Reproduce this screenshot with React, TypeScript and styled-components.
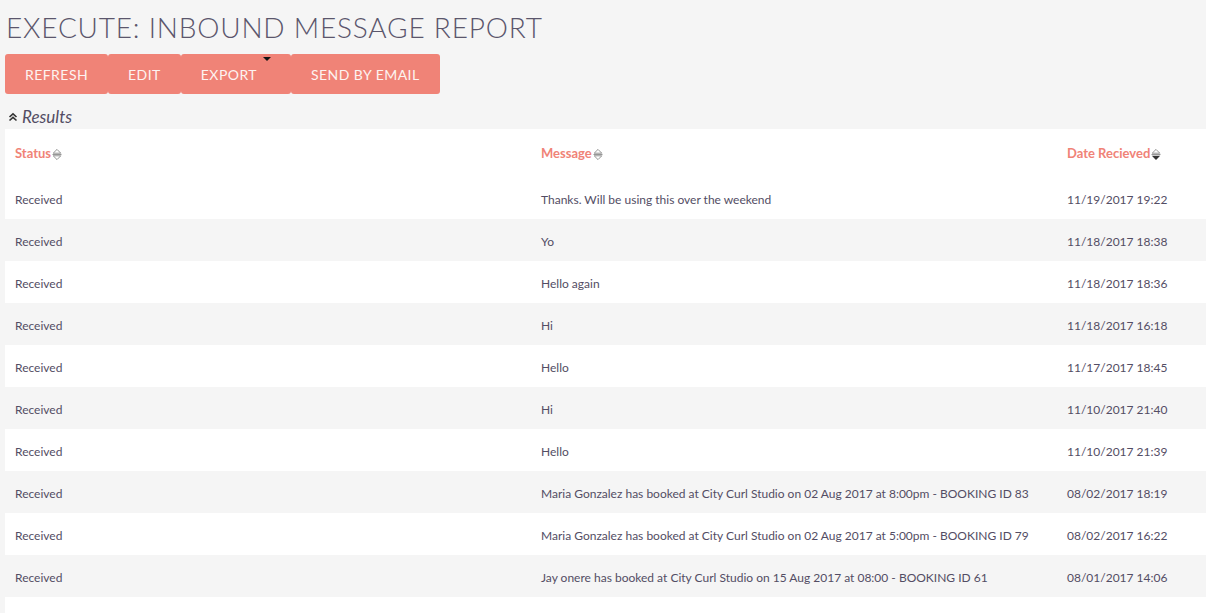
import styled, { createGlobalStyle } from "styled-components";

const Colors = {
    bg: "#f5f5f5",
    text: "#534d64",
    accent: "#f08377",
    white: "#ffffff",
};

const GlobalStyle = createGlobalStyle`
    html, body {
        margin: 0;
        padding: 0;
        background: ${Colors.bg};
        font-family: Lato, "Open Sans", sans-serif;
        color: ${Colors.text};
        overflow: hidden;
    }
`;

const Page = styled.div`
    padding: 0 0 0 5px;
`;

const Title = styled.h1`
    margin: 10px 0 0 1px;
    font-size: 28px;
    font-weight: 300;
    letter-spacing: 0.8px;
    line-height: 35px;
    color: #5b566c;
`;

const ButtonBar = styled.div`
    display: flex;
    margin-top: 9px;
`;

const ActionButton = styled.button<{ $caret?: boolean }>`
    position: relative;
    height: 40px;
    padding: 0 ${(p) => (p.$caret ? "34px" : "20px")} 0 20px;
    border: 0;
    border-radius: 3px;
    background: ${Colors.accent};
    color: #fdf3f1;
    font-family: Lato, sans-serif;
    font-size: 14px;
    letter-spacing: 0.45px;
    text-transform: uppercase;
    cursor: pointer;
`;

const Caret = styled.span`
    position: absolute;
    top: 3px;
    right: 20px;
    width: 0;
    height: 0;
    border-left: 4px solid transparent;
    border-right: 4px solid transparent;
    border-top: 4px solid #111;
`;

const ResultsToggle = styled.div`
    display: flex;
    align-items: center;
    gap: 4px;
    height: 35px;
    padding: 10px 0 0 3px;
    box-sizing: border-box;
    font-size: 17px;
    font-style: italic;
    color: ${Colors.text};
`;

const Table = styled.table`
    width: 100%;
    border-collapse: collapse;
    table-layout: fixed;
`;

const HeadCell = styled.th<{ $width?: number }>`
    width: ${(p) => (p.$width ? `${p.$width}px` : "auto")};
    height: 48px;
    padding: 0 10px;
    background: ${Colors.white};
    text-align: left;
    font-size: 13px;
    font-weight: 700;
    color: ${Colors.accent};
    white-space: nowrap;
`;

const Row = styled.tr<{ $alt: boolean }>`
    background: ${(p) => (p.$alt ? Colors.bg : Colors.white)};
`;

const Cell = styled.td`
    height: 42px;
    box-sizing: border-box;
    padding: 2px 10px 0;
    font-size: 12px;
    color: ${Colors.text};
    white-space: nowrap;
`;

const SortIcon = styled.svg`
    margin-left: 1px;
    vertical-align: -3px;
`;

function Sort({ desc }: { desc?: boolean }) {
    return (
        <SortIcon width="10" height="13" viewBox="0 0 10 13">
            <path d="M1.2 5.2 L5 1.4 L8.8 5.2 Z" fill="none" stroke="#8a8a8a" strokeWidth="0.9" />
            <line x1="0.5" y1="6.5" x2="9.5" y2="6.5" stroke="#8a8a8a" strokeWidth="0.9" />
            {desc ? (
                <path d="M0.8 7.8 L9.2 7.8 L5 12 Z" fill="#333" />
            ) : (
                <path d="M1.2 7.8 L5 11.6 L8.8 7.8 Z" fill="none" stroke="#8a8a8a" strokeWidth="0.9" />
            )}
        </SortIcon>
    );
}

function ChevronsUp() {
    return (
        <svg width="10" height="10" viewBox="0 0 10 10">
            <path d="M1.5 5 L5 1.8 L8.5 5" fill="none" stroke="#333" strokeWidth="1.6" />
            <path d="M1.5 8.5 L5 5.3 L8.5 8.5" fill="none" stroke="#333" strokeWidth="1.6" />
        </svg>
    );
}

const rows = [
    ["Thanks. Will be using this over the weekend", "11/19/2017 19:22"],
    ["Yo", "11/18/2017 18:38"],
    ["Hello again", "11/18/2017 18:36"],
    ["Hi", "11/18/2017 16:18"],
    ["Hello", "11/17/2017 18:45"],
    ["Hi", "11/10/2017 21:40"],
    ["Hello", "11/10/2017 21:39"],
    ["Maria Gonzalez has booked at City Curl Studio on 02 Aug 2017 at 8:00pm - BOOKING ID 83", "08/02/2017 18:19"],
    ["Maria Gonzalez has booked at City Curl Studio on 02 Aug 2017 at 5:00pm - BOOKING ID 79", "08/02/2017 16:22"],
    ["Jay onere has booked at City Curl Studio on 15 Aug 2017 at 08:00 - BOOKING ID 61", "08/01/2017 14:06"],
];

export default function App() {
    return (
        <Page>
            <GlobalStyle />
            <Title>EXECUTE: INBOUND MESSAGE REPORT</Title>
            <ButtonBar>
                <ActionButton>Refresh</ActionButton>
                <ActionButton>Edit</ActionButton>
                <ActionButton $caret>
                    Export
                    <Caret />
                </ActionButton>
                <ActionButton>Send by Email</ActionButton>
            </ButtonBar>
            <ResultsToggle>
                <ChevronsUp />
                Results
            </ResultsToggle>
            <Table>
                <thead>
                    <tr>
                        <HeadCell $width={506}>Status<Sort /></HeadCell>
                        <HeadCell $width={506}>Message<Sort /></HeadCell>
                        <HeadCell>Date Recieved<Sort desc /></HeadCell>
                    </tr>
                </thead>
                <tbody>
                    {rows.map((r, i) => (
                        <Row key={i} $alt={i % 2 === 1}>
                            <Cell>Received</Cell>
                            <Cell>{r[0]}</Cell>
                            <Cell>{r[1]}</Cell>
                        </Row>
                    ))}
                    <Row $alt={false}>
                        <Cell />
                        <Cell />
                        <Cell />
                    </Row>
                </tbody>
            </Table>
        </Page>
    );
}
